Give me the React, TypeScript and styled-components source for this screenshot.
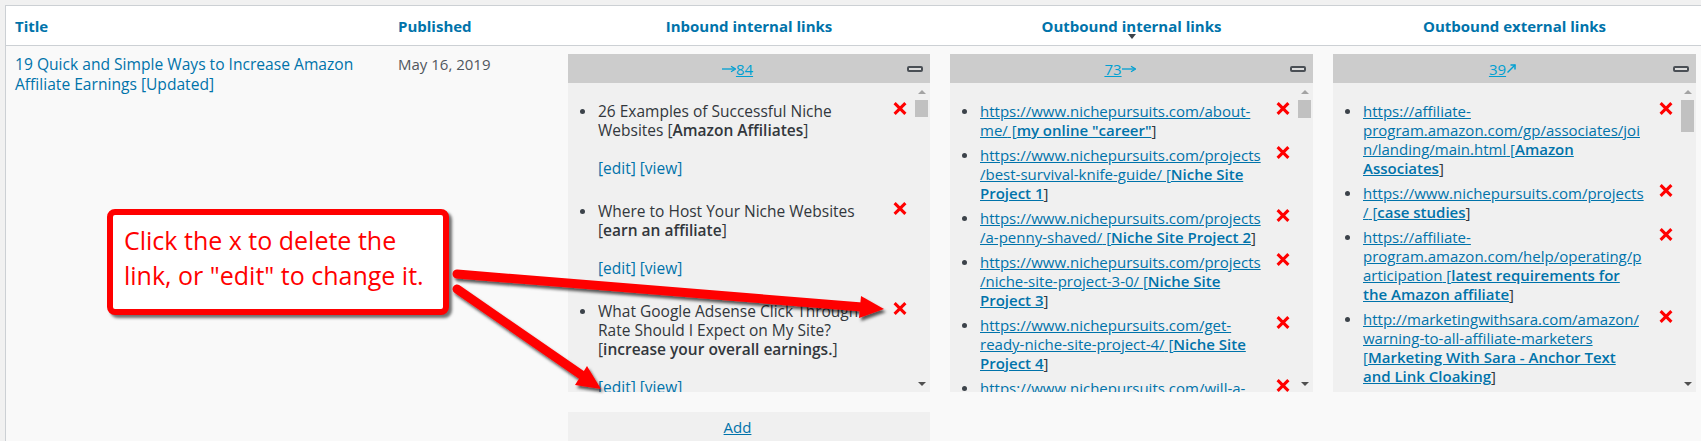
import React from "react";
import styled, { createGlobalStyle } from "styled-components";

const GlobalStyle = createGlobalStyle`
  html, body { margin: 0; padding: 0; background: #f1f1f1; overflow: hidden; }
  body { font-family: "Open Sans", "Noto Sans", "DejaVu Sans", sans-serif; color: #32373c; }
  * { box-sizing: border-box; }
`;

const Page = styled.div`
  position: relative;
  width: 1701px;
  height: 441px;
  padding: 5px 0 0 5px;
  overflow: hidden;
`;

const Table = styled.div`
  display: grid;
  grid-template-columns: 382px 170px 382px 383px 383px;
  grid-template-rows: 40px 420px;
  width: max-content;
  border: 1px solid #ccd0d4;
  background: #f9f9f9;
`;

const HeadCell = styled.div<{ $center?: boolean; $pl: number }>`
  position: relative;
  display: flex;
  align-items: center;
  justify-content: ${(p) => (p.$center ? "center" : "flex-start")};
  padding-left: ${(p) => p.$pl}px;
  background: #fff;
  border-bottom: 1px solid #ccd0d4;
  font-weight: 700;
  font-size: 15px;
  color: #0073aa;
`;

const SortArrow = styled.span`
  position: absolute;
  left: 50%;
  top: 28px;
  margin-left: -4px;
  width: 0;
  height: 0;
  border-left: 4px solid transparent;
  border-right: 4px solid transparent;
  border-top: 5px solid #3c434a;
`;

const BodyCell = styled.div<{ $pl: number }>`
  padding: 8px 10px 0 ${(p) => p.$pl}px;
`;

const TitleLink = styled.a`
  display: block;
  font-size: 15.6px;
  line-height: 20px;
  color: #0073aa;
  text-decoration: none;
`;

const DateText = styled.div`
  font-size: 15px;
  line-height: 20px;
  color: #50575e;
`;

const Panel = styled.div`
  display: flex;
  flex-direction: column;
`;

const PanelHead = styled.div`
  display: flex;
  align-items: center;
  height: 29px;
  background: #cccccc;
  padding-right: 7px;
`;

const Count = styled.div`
  flex: 1;
  display: flex;
  align-items: center;
  justify-content: center;
  font-size: 15px;
  color: #00a0d2;
`;

const CountLink = styled.a`
  color: #00a0d2;
  text-decoration: underline;
`;

const Collapse = styled.span`
  flex: none;
  width: 16px;
  height: 6px;
  border: 2px solid #4a4f55;
  border-radius: 2px;
  background: #dcdcdc;
`;

const PanelBody = styled.div`
  display: flex;
  height: 309px;
  background: #f0f0f0;
`;

const List = styled.ul`
  flex: 1;
  min-width: 0;
  margin: 0;
  padding: 19px 8px 0 0;
  list-style: none;
  overflow: hidden;
`;

const Item = styled.li<{ $gap: number }>`
  display: flex;
  align-items: flex-start;
  padding-left: 12px;
  margin-bottom: ${(p) => p.$gap}px;
`;

const Dot = styled.span`
  flex: none;
  width: 5px;
  height: 5px;
  border-radius: 50%;
  background: #3c434a;
  margin: 7px 13px 0 0;
`;

const ItemText = styled.div<{ $size: number }>`
  flex: 1;
  min-width: 0;
  font-size: ${(p) => p.$size}px;
  line-height: 19px;
  color: #32373c;
  overflow-wrap: break-word;

  b {
    font-weight: 600;
  }
`;

const Actions = styled.div`
  margin-top: 19px;
  color: #0073aa;
`;

const UrlLink = styled.a`
  color: #0073aa;
  text-decoration: underline;
`;

const DeleteBtn = styled.span`
  flex: none;
  display: flex;
  width: 14px;
  height: 13px;
  margin: 0 0 0 12px;
`;

const Scrollbar = styled.div`
  flex: none;
  width: 13px;
  margin-right: 2px;
  display: flex;
  flex-direction: column;
  align-items: center;
`;

const ArrowBox = styled.div`
  height: 17px;
  display: flex;
  align-items: center;
  justify-content: center;
`;

const TriUp = styled.span`
  width: 0;
  height: 0;
  border-left: 4px solid transparent;
  border-right: 4px solid transparent;
  border-bottom: 4px solid #a3a3a3;
`;

const TriDown = styled.span`
  width: 0;
  height: 0;
  border-left: 4px solid transparent;
  border-right: 4px solid transparent;
  border-top: 4px solid #505050;
`;

const Thumb = styled.div<{ $h: number }>`
  width: 13px;
  height: ${(p) => p.$h}px;
  background: #c1c1c1;
`;

const Spacer = styled.div`
  flex: 1;
`;

const AddBar = styled.div`
  margin-top: 20px;
  height: 30px;
  background: #f0f0f0;
  display: flex;
  align-items: center;
  justify-content: center;
  padding-right: 23px;
  font-size: 15px;
`;

const Callout = styled.div`
  position: absolute;
  left: 107px;
  top: 209px;
  width: 342px;
  height: 106px;
  border: 6px solid #ff0000;
  border-radius: 8px;
  background: #fff;
  box-shadow: 3px 3px 3px rgba(0, 0, 0, 0.55);
  padding: 8px 0 0 11px;
  font-size: 25px;
  line-height: 35px;
  color: #ff0000;
`;

const Overlay = styled.svg`
  position: absolute;
  left: 0;
  top: 0;
  pointer-events: none;
`;

const XIcon = () => (
  <svg width="14" height="13" viewBox="0 0 14 13">
    <path d="M1.6 1.2 L12.4 11.8 M12.4 1.2 L1.6 11.8" stroke="#ff0000" strokeWidth="3.1" fill="none" />
  </svg>
);

const RightArrow = () => (
  <svg width="14" height="8" viewBox="0 0 14 8">
    <path d="M0 4 H12" stroke="#00a0d2" strokeWidth="1.3" />
    <path d="M9 1.2 L13.5 4 L9 6.8" stroke="#00a0d2" strokeWidth="1.3" fill="none" />
  </svg>
);

const DiagArrow = () => (
  <svg width="11" height="11" viewBox="0 0 11 11">
    <path d="M1.5 9.5 L9 2" stroke="#00a0d2" strokeWidth="1.5" />
    <path d="M4.5 2 H9 V6.5" stroke="#00a0d2" strokeWidth="1.5" fill="none" />
  </svg>
);

type Entry = { url: string; anchor: string };

const inbound = [
  { title: "26 Examples of Successful Niche Websites", anchor: "Amazon Affiliates" },
  { title: "Where to Host Your Niche Websites", anchor: "earn an affiliate" },
  { title: "What Google Adsense Click Through Rate Should I Expect on My Site?", anchor: "increase your overall earnings." },
];

const outInternal: Entry[] = [
  { url: "https://www.nichepursuits.com/about-me/", anchor: 'my online "career"' },
  { url: "https://www.nichepursuits.com/projects/best-survival-knife-guide/", anchor: "Niche Site Project 1" },
  { url: "https://www.nichepursuits.com/projects/a-penny-shaved/", anchor: "Niche Site Project 2" },
  { url: "https://www.nichepursuits.com/projects/niche-site-project-3-0/", anchor: "Niche Site Project 3" },
  { url: "https://www.nichepursuits.com/get-ready-niche-site-project-4/", anchor: "Niche Site Project 4" },
  { url: "https://www.nichepursuits.com/will-a-niche-site-work/", anchor: "Niche Site Project 5" },
];

const outExternal: Entry[] = [
  { url: "https://affiliate-program.amazon.com/gp/associates/join/landing/main.html", anchor: "Amazon Associates" },
  { url: "https://www.nichepursuits.com/projects/", anchor: "case studies" },
  { url: "https://affiliate-program.amazon.com/help/operating/participation", anchor: "latest requirements for the Amazon affiliate" },
  { url: "http://marketingwithsara.com/amazon/warning-to-all-affiliate-marketers", anchor: "Marketing With Sara - Anchor Text and Link Cloaking" },
];

const ScrollTrack = ({ thumb }: { thumb: number }) => (
  <Scrollbar>
    <ArrowBox>
      <TriUp />
    </ArrowBox>
    <Thumb $h={thumb} />
    <Spacer />
    <ArrowBox>
      <TriDown />
    </ArrowBox>
  </Scrollbar>
);

const LinkList = ({ entries, thumb }: { entries: Entry[]; thumb: number }) => (
  <PanelBody>
    <List>
      {entries.map((e, i) => (
        <Item key={i} $gap={6}>
          <Dot />
          <ItemText $size={15}>
            <UrlLink href="#">
              {e.url} [<b>{e.anchor}</b>
            </UrlLink>
            ]
          </ItemText>
          <DeleteBtn>
            <XIcon />
          </DeleteBtn>
        </Item>
      ))}
    </List>
    <ScrollTrack thumb={thumb} />
  </PanelBody>
);

export default function App() {
  return (
    <Page>
      <GlobalStyle />
      <Table>
        <HeadCell $pl={9}>Title</HeadCell>
        <HeadCell $pl={10}>Published</HeadCell>
        <HeadCell $center $pl={0}>Inbound internal links</HeadCell>
        <HeadCell $center $pl={0}>
          Outbound internal links
          <SortArrow />
        </HeadCell>
        <HeadCell $center $pl={0}>Outbound external links</HeadCell>

        <BodyCell $pl={9}>
          <TitleLink href="#">19 Quick and Simple Ways to Increase Amazon Affiliate Earnings [Updated]</TitleLink>
        </BodyCell>
        <BodyCell $pl={10}>
          <DateText>May 16, 2019</DateText>
        </BodyCell>
        <BodyCell $pl={10}>
          <Panel>
            <PanelHead>
              <Count>
                <RightArrow />
                <CountLink href="#">84</CountLink>
              </Count>
              <Collapse />
            </PanelHead>
            <PanelBody>
              <List>
                {inbound.map((e, i) => (
                  <Item key={i} $gap={24}>
                    <Dot />
                    <ItemText $size={15.5}>
                      {e.title} [<b>{e.anchor}</b>]
                      <Actions>[edit] [view]</Actions>
                    </ItemText>
                    <DeleteBtn>
                      <XIcon />
                    </DeleteBtn>
                  </Item>
                ))}
              </List>
              <ScrollTrack thumb={17} />
            </PanelBody>
            <AddBar>
              <UrlLink href="#">Add</UrlLink>
            </AddBar>
          </Panel>
        </BodyCell>
        <BodyCell $pl={10}>
          <Panel>
            <PanelHead>
              <Count>
                <CountLink href="#">73</CountLink>
                <RightArrow />
              </Count>
              <Collapse />
            </PanelHead>
            <LinkList entries={outInternal} thumb={18} />
          </Panel>
        </BodyCell>
        <BodyCell $pl={10}>
          <Panel>
            <PanelHead>
              <Count>
                <CountLink href="#">39</CountLink>
                <DiagArrow />
              </Count>
              <Collapse />
            </PanelHead>
            <LinkList entries={outExternal} thumb={32} />
          </Panel>
        </BodyCell>
      </Table>

      <Callout>
        Click the x to delete the
        <br />
        link, or "edit" to change it.
      </Callout>

      <Overlay width="1701" height="441" viewBox="0 0 1701 441">
        <defs>
          <filter id="shadow" x="-10%" y="-30%" width="130%" height="160%">
            <feDropShadow dx="2" dy="3" stdDeviation="1.6" floodColor="#000" floodOpacity="0.65" />
          </filter>
        </defs>
        <g filter="url(#shadow)">
          <line x1="457" y1="274" x2="862" y2="307" stroke="#ff0000" strokeWidth="9" strokeLinecap="round" />
          <polygon points="884,309 859,318 861,296" fill="#ff0000" />
          <line x1="457" y1="289" x2="583" y2="376" stroke="#ff0000" strokeWidth="9" strokeLinecap="round" />
          <polygon points="601,389 575,385 587,366" fill="#ff0000" />
        </g>
      </Overlay>
    </Page>
  );
}
